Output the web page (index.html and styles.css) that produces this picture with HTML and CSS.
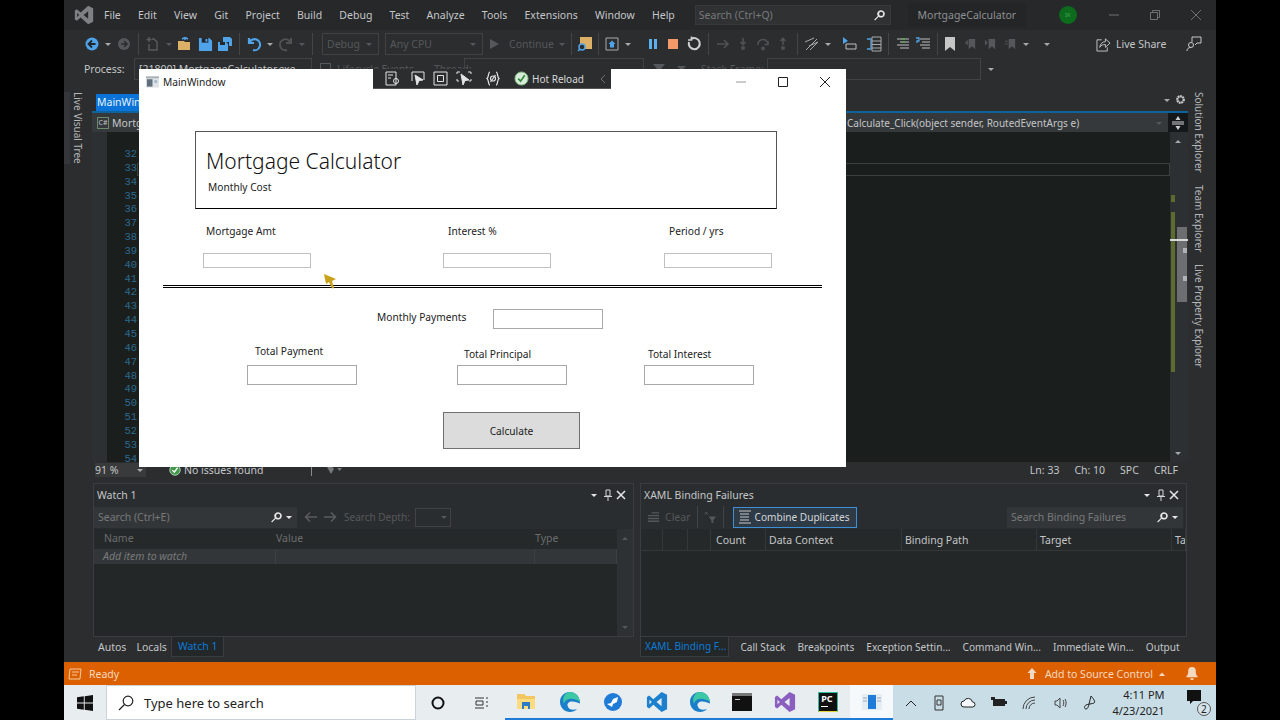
FILE: index.html
```html
<!DOCTYPE html>
<html lang="en">
<head>
    <meta charset="UTF-8">
    <title>MortgageCalculator - Visual Studio</title>
    <link rel="stylesheet" href="styles.css">
</head>
<body>
<svg class="defs" width="0" height="0">
  <symbol id="vs" viewBox="0 0 24 24"><path d="M17 1 L23 4 V20 L17 23 L8 15 L3.5 19 L1 17.5 V6.5 L3.5 5 L8 9 Z M17 7.5 L11.5 12 L17 16.5 Z M3.8 9.5 V14.5 L6.3 12 Z"/></symbol>
  <symbol id="mag" viewBox="0 0 16 16"><path d="M10 1.5a4.5 4.5 0 1 1-3 7.9L2.5 14 1.5 13 6 8.5A4.5 4.5 0 0 1 10 1.5zm0 2a2.5 2.5 0 1 0 0 5 2.5 2.5 0 0 0 0-5z"/></symbol>
  <symbol id="drop" viewBox="0 0 8 8"><path d="M1 3h6L4 6z"/></symbol>
  <symbol id="check" viewBox="0 0 16 16"><circle cx="8" cy="8" r="7" fill="#3f9a4a" stroke="#d8e8d8"/><path d="M4.5 8.2 7 10.8 11.5 5" fill="none" stroke="#fff" stroke-width="1.8"/></symbol>
  <symbol id="edge" viewBox="0 0 22 22"><path d="M11 1C5 1 1 5.5 1 11c0 6 5 10 10 10 2.5 0 5-.8 7-3-4 1.500-9 .5-9.5-3.5-.3-2 1.500-4 4.500-4 3.500 0 6 1.500 8 2C21 6 17 1 11 1z" fill="#1b7ec9"/><path d="M11 1c5 0 9 4 10 9.500-3-1.500-7-3.500-11-2.500C7 8.800 5 11 5 13 2.500 7 6 1 11 1z" fill="#3cc8a5"/></symbol>
</svg>

<div class="screen">
  <div class="desktop">

    <div class="titlebar">
      <svg class="vs-logo"><use href="#vs"/></svg>
      <nav class="menu">
        <span>File</span><span>Edit</span><span>View</span><span>Git</span><span>Project</span><span>Build</span><span>Debug</span><span>Test</span><span>Analyze</span><span>Tools</span><span>Extensions</span><span>Window</span><span>Help</span>
      </nav>
      <div class="quick-search">
        <span>Search (Ctrl+Q)</span>
        <svg class="mag-icon"><use href="#mag"/></svg>
      </div>
      <div class="solution-name">MortgageCalculator</div>
      <div class="avatar">IK</div>
      <div class="win-buttons">
        <svg width="12" height="12" viewBox="0 0 12 12"><path d="M1 6h10" stroke="#6e7072"/></svg>
        <svg width="12" height="12" viewBox="0 0 12 12" fill="none" stroke="#6e7072"><path d="M1.5 3.5h7v7h-7zM3.5 3.5v-2h7v7h-2"/></svg>
        <svg width="12" height="12" viewBox="0 0 12 12"><path d="M1 1l10 10M11 1L1 11" stroke="#6e7072"/></svg>
      </div>
    </div>

    <div class="toolbar">
      <i class="grip"></i>
      <span class="ic"><svg width="16" height="16" viewBox="0 0 16 16"><circle cx="8" cy="8" r="6.5" fill="#4fa3e8"/><path d="M8 4.5 4.5 8 8 11.5M5 8h6.5" fill="none" stroke="#22262a" stroke-width="1.8"/></svg></span>
      <svg class="dd"><use href="#drop"/></svg>
      <span class="ic"><svg width="16" height="16" viewBox="0 0 16 16"><circle cx="8" cy="8" r="6" fill="#55585a"/><path d="M8 5l3 3-3 3M11 8H5" fill="none" stroke="#2a2c2e" stroke-width="1.6"/></svg></span>
      <i class="sep"></i>
      <span class="ic"><svg width="16" height="16" viewBox="0 0 16 16" fill="none" stroke="#5a5c5e" stroke-width="1.4"><path d="M4 8v6h8V6l-3-3H7"/><path d="M4 1v5M1.5 3.5h5"/></svg></span>
      <svg class="dd dim"><use href="#drop"/></svg>
      <span class="ic"><svg width="16" height="16" viewBox="0 0 16 16"><path d="M1 5h6l1 1h5v8H1z" fill="#dcb067"/><path d="M8 4V1.500M8 1.500l3 1.500M8 1.500 5 3" stroke="#4fa3e8" stroke-width="1.500" fill="none"/></svg></span>
      <span class="ic"><svg width="15" height="15" viewBox="0 0 16 16"><path d="M1 1h11l3 3v11H1z" fill="#4fa3e8"/><path d="M4 1h7v5H4z" fill="#23262a"/><path d="M8 2h2v3H8z" fill="#4fa3e8"/></svg></span>
      <span class="ic"><svg width="16" height="16" viewBox="0 0 16 16"><path d="M6 1h7l2 2v7h-3V6H6z" fill="#4fa3e8"/><path d="M1 6h8l2 2v7H1z" fill="#4fa3e8"/><path d="M3 6h5v3H3z" fill="#23262a"/></svg></span>
      <i class="sep"></i>
      <span class="ic"><svg width="16" height="16" viewBox="0 0 16 16" fill="none" stroke="#4fa3e8" stroke-width="2.2"><path d="M3 2v5h5"/><path d="M3.500 6.500A5.500 5.500 0 1 1 7 14"/></svg></span>
      <svg class="dd"><use href="#drop"/></svg>
      <span class="ic"><svg width="16" height="16" viewBox="0 0 16 16" fill="none" stroke="#505254" stroke-width="2"><path d="M13 2v5H8"/><path d="M12.500 6.500A5.500 5.500 0 1 0 9 14"/></svg></span>
      <svg class="dd dim"><use href="#drop"/></svg>
      <i class="sep"></i>
      <div class="combo combo-debug"><span>Debug</span><svg class="dd dim"><use href="#drop"/></svg></div>
      <div class="combo combo-cpu"><span>Any CPU</span><svg class="dd dim"><use href="#drop"/></svg></div>
      <span class="ic ic-play"><svg width="12" height="12" viewBox="0 0 12 12"><path d="M2 1l9 5-9 5z" fill="#55585a"/></svg></span>
      <span class="tool-label">Continue</span>
      <svg class="dd dim dd-continue"><use href="#drop"/></svg>
      <i class="sep sep-tight"></i>
      <span class="ic"><svg width="16" height="16" viewBox="0 0 16 16"><path d="M3 1h12v12H8V8H3z" fill="#dcb067"/><circle cx="5" cy="11" r="3" fill="none" stroke="#4fa3e8" stroke-width="1.500"/><path d="M3 13l-2 2" stroke="#4fa3e8" stroke-width="1.500"/></svg></span>
      <i class="sep sep-tight"></i>
      <span class="ic"><svg width="14" height="14" viewBox="0 0 14 14"><path d="M1 1h12v12H1z" fill="none" stroke="#a8aaac"/><path d="M7 3.500 3.500 7H5v3.500h4V7h1.500z" fill="#4fa3e8"/></svg></span>
      <svg class="dd"><use href="#drop"/></svg>
      <i class="grip grip-mid"></i>
      <span class="ic"><svg width="12" height="12" viewBox="0 0 12 12"><path d="M2 1h3v10H2zM7 1h3v10H7z" fill="#5cb0ee"/></svg></span>
      <span class="ic"><svg width="12" height="12" viewBox="0 0 12 12"><path d="M1 1h10v10H1z" fill="#f49a6a"/></svg></span>
      <span class="ic ic-restart"><svg width="16" height="16" viewBox="0 0 16 16" fill="none" stroke="#d0d0d0" stroke-width="2"><path d="M5 3.200A5.500 5.500 0 1 1 3 6"/><path d="M5.500 .5v3.500H2" stroke-width="1.600"/></svg></span>
      <i class="sep"></i>
      <span class="ic"><svg width="14" height="14" viewBox="0 0 14 14" fill="none" stroke="#505254" stroke-width="1.600"><path d="M1 7h11M8 3l4 4-4 4"/></svg></span>
      <span class="ic"><svg width="14" height="14" viewBox="0 0 14 14" fill="none" stroke="#505254" stroke-width="1.600"><path d="M7 1v6M4.500 5 7 7.500 9.500 5"/><circle cx="7" cy="11" r="1.200"/></svg></span>
      <span class="ic"><svg width="14" height="14" viewBox="0 0 14 14" fill="none" stroke="#505254" stroke-width="1.600"><path d="M2 8a5 5 0 0 1 10-1M12 4v3.500H8.500"/><circle cx="7" cy="11.500" r="1.200"/></svg></span>
      <span class="ic"><svg width="14" height="14" viewBox="0 0 14 14" fill="none" stroke="#505254" stroke-width="1.600"><path d="M7 8V2M4.500 4 7 1.500 9.500 4"/><circle cx="7" cy="11" r="1.200"/></svg></span>
      <i class="sep"></i>
      <span class="ic"><svg width="16" height="16" viewBox="0 0 16 16" fill="none" stroke="#a8aaac"><path d="M1 6l9-4M5 10l9-4M2 14 13 3M6 14l8-8"/></svg></span>
      <svg class="dd"><use href="#drop"/></svg>
      <i class="grip grip-mid grip-close"></i>
      <span class="ic"><svg width="16" height="16" viewBox="0 0 16 16"><path d="M1 1l5 4-5 3z" fill="#4fa3e8"/><path d="M4 8h10v5H4z" fill="none" stroke="#c0c0c0"/></svg></span>
      <span class="ic ic-wide"><svg width="16" height="16" viewBox="0 0 16 16" fill="none"><path d="M1 3h4v10H1" stroke="#4fa3e8" stroke-width="1.300"/><path d="M6 1h9v14H6z M6 5h9M6 8.500h9M6 12h9" stroke="#a8aaac"/></svg></span>
      <i class="sep"></i>
      <span class="ic"><svg width="14" height="14" viewBox="0 0 14 14"><path d="M1 2h12M4 5h9M1 8h12M4 11h9" stroke="#c0c0c0"/><path d="M5 2h4M5 5h4" stroke="#63b04f"/></svg></span>
      <span class="ic"><svg width="16" height="14" viewBox="0 0 16 14"><path d="M5 2h10M7 5h8M5 8h10M7 11h8" stroke="#c0c0c0"/><path d="M1 1h3v3H2v2" fill="none" stroke="#4fa3e8" stroke-width="1.300"/></svg></span>
      <i class="sep sep-left"></i>
      <span class="ic"><svg width="12" height="14" viewBox="0 0 12 14"><path d="M1 0h10v14L6 10 1 14z" fill="#c6c6c6"/></svg></span>
      <span class="ic"><svg width="13" height="13" viewBox="0 0 14 14"><path d="M5 1h7v11L8.500 9 5 12z M1 5l3-3v6z" fill="#55585a"/></svg></span>
      <span class="ic"><svg width="13" height="13" viewBox="0 0 14 14"><path d="M5 1h7v11L8.500 9 5 12z M1 2l3 3-3 3z" fill="#55585a"/></svg></span>
      <span class="ic"><svg width="13" height="13" viewBox="0 0 14 14"><path d="M5 1h7v11L8.500 9 5 12zM1 3h3v1H1zM1 6h3v1H1z" fill="#55585a"/></svg></span>
      <svg class="dd"><use href="#drop"/></svg>
      <i class="grip grip-mid"></i>
      <svg class="dd"><use href="#drop"/></svg>
      <div class="live-share">
        <svg width="15" height="15" viewBox="0 0 16 16" fill="none" stroke="#c8c8c8"><path d="M6 3H1v12h11v-4"/><path d="M4 11c.5-4 3-6 6-6V2l5 4.500L10 11V8c-3 0-5 1-6 3z"/></svg>
        <span>Live Share</span>
      </div>
      <span class="feedback"><svg width="16" height="16" viewBox="0 0 16 16" fill="none" stroke="#c8c8c8"><circle cx="5" cy="9" r="2.500"/><path d="M1 15c0-2.500 1.500-3.500 4-3.500M6 6V1h9v6h-4l-2 2"/></svg></span>
    </div>

    <div class="debugbar">
      <i class="grip"></i>
      <span class="process-label">Process:</span>
      <div class="combo combo-process"><span>[21800] MortgageCalculator.exe</span></div>
      <span class="lifecycle-icon"></span>
      <span class="debug-dim lab-lifecycle">Lifecycle Events</span>
      <span class="debug-dim lab-thread">Thread:</span>
      <div class="combo combo-thread"></div>
      <svg class="filter-icon" width="12" height="10" viewBox="0 0 12 10"><path d="M0 0h12L7 6v4H5V6z" fill="#55585a"/></svg>
      <svg class="filter-icon" width="12" height="10" viewBox="0 0 12 10"><path d="M3 2h9L8 6v4H7V6z" fill="#55585a"/></svg>
      <span class="debug-dim lab-stack">Stack Frame:</span>
      <div class="combo combo-stack"></div>
      <svg class="dd dd-stack"><use href="#drop"/></svg>
    </div>

    <div class="workspace">
      <aside class="rail rail-left">
        <div class="rail-tab">Live Visual Tree</div>
      </aside>

      <div class="center">
        <section class="docwell">
          <div class="tabstrip">
            <div class="doc-tab">MainWindow.xaml.cs</div>
            <div class="tabstrip-tools">
              <svg class="dd"><use href="#drop"/></svg>
              <svg width="11" height="11" viewBox="0 0 12 12"><circle cx="6" cy="6" r="3.500" fill="none" stroke="#d0d0d0" stroke-width="2.500" stroke-dasharray="2 .6"/></svg>
            </div>
          </div>
          <div class="navbar">
            <div class="nav-left"><span class="cs-badge">C#</span><span>MortgageCalculator</span></div>
            <div class="nav-right">
              <span class="nav-member">Calculate_Click(object sender, RoutedEventArgs e)</span>
              <svg class="dd dim"><use href="#drop"/></svg>
              <span class="splitter"><svg width="12" height="14" viewBox="0 0 12 14"><path d="M0 6h12M0 8h12" stroke="#d0d0d0"/><path d="M6 0 3.500 4h5zM6 14l-2.500-4h5z" fill="#d0d0d0"/></svg></span>
            </div>
          </div>
          <div class="editor">
            <div class="margin-bar"></div>
            <div class="gutter">
              <span>32</span><span>33</span><span>34</span><span>35</span><span>36</span><span>37</span><span>38</span><span>39</span><span>40</span><span>41</span><span>42</span><span>43</span><span>44</span><span>45</span><span>46</span><span>47</span><span>48</span><span>49</span><span>50</span><span>51</span><span>52</span><span>53</span><span>54</span>
            </div>
            <div class="code">
              <div class="current-line"></div>
            </div>
            <div class="scrollbar">
              <svg class="dd dd-up"><use href="#drop"/></svg>
              <div class="change-mark change-short"></div>
              <div class="change-mark change-long"></div>
              <div class="thumb"></div>
              <div class="caret-mark"></div>
              <div class="map-dot map-dot-a"></div>
              <div class="map-dot map-dot-b"></div>
              <svg class="dd dd-down"><use href="#drop"/></svg>
            </div>
          </div>
          <div class="doc-status">
            <div class="zoom-box"><span>91 %</span><svg class="dd"><use href="#drop"/></svg></div>
            <svg class="status-check"><use href="#check"/></svg>
            <span class="issues">No issues found</span>
            <i class="status-sep"></i>
            <svg class="status-brush" width="16" height="10" viewBox="0 0 16 10"><path d="M1 2l4-2 3 4-3 5zM11 3h5l-2.500 3z" fill="#77797b"/></svg>
            <div class="caret-info"><span>Ln: 33</span><span>Ch: 10</span><span>SPC</span><span>CRLF</span></div>
          </div>
        </section>

        <section class="panels">
          <div class="panel panel-watch">
            <div class="panel-box">
              <div class="panel-head">
                <span>Watch 1</span><i class="hatch"></i>
                <svg class="dd dd-light"><use href="#drop"/></svg>
                <svg width="10" height="12" viewBox="0 0 10 12" fill="none" stroke="#d8d8d8"><path d="M3 1h4v6H3zM1 7.500h8M5 8v4"/></svg>
                <svg width="10" height="10" viewBox="0 0 10 10"><path d="M1 1l8 8M9 1 1 9" stroke="#e8e8e8" stroke-width="1.500"/></svg>
              </div>
              <div class="watch-tools">
                <div class="search-box search-watch">
                  <span>Search (Ctrl+E)</span>
                  <svg class="mag-icon"><use href="#mag"/></svg>
                  <svg class="dd dd-light"><use href="#drop"/></svg>
                </div>
                <svg class="arrow" width="14" height="12" viewBox="0 0 14 12" fill="none" stroke="#5a5c5e" stroke-width="1.500"><path d="M13 6H2M6 1.500 1.500 6 6 10.500"/></svg>
                <svg class="arrow" width="14" height="12" viewBox="0 0 14 12" fill="none" stroke="#5a5c5e" stroke-width="1.500"><path d="M1 6h11M8 1.500 12.500 6 8 10.500"/></svg>
                <span class="depth-label">Search Depth:</span>
                <div class="depth-box"><svg class="dd dim"><use href="#drop"/></svg></div>
              </div>
              <div class="watch-body">
                <div class="watch-table">
                  <div class="watch-row watch-header"><span>Name</span><span>Value</span><span>Type</span></div>
                  <div class="watch-row watch-add"><span>Add item to watch</span><span></span><span></span></div>
                </div>
                <div class="watch-scroll">
                  <svg class="dd dd-up"><use href="#drop"/></svg>
                  <svg class="dd dd-down"><use href="#drop"/></svg>
                </div>
              </div>
            </div>
            <div class="panel-tabs">
              <span>Autos</span><span>Locals</span><span class="tab-on">Watch 1</span>
            </div>
          </div>

          <div class="panel panel-xaml">
            <div class="panel-box">
              <div class="panel-head">
                <span>XAML Binding Failures</span><i class="hatch"></i>
                <svg class="dd dd-light"><use href="#drop"/></svg>
                <svg width="10" height="12" viewBox="0 0 10 12" fill="none" stroke="#d8d8d8"><path d="M3 1h4v6H3zM1 7.500h8M5 8v4"/></svg>
                <svg width="10" height="10" viewBox="0 0 10 10"><path d="M1 1l8 8M9 1 1 9" stroke="#e8e8e8" stroke-width="1.500"/></svg>
              </div>
              <div class="xaml-tools">
                <svg class="clear-icon" width="13" height="13" viewBox="0 0 14 14"><path d="M5 2h8M1 5h12M1 8h12M1 11h12" stroke="#55585a" stroke-width="1.500"/></svg>
                <span class="clear-label">Clear</span>
                <i class="sep"></i>
                <svg width="13" height="13" viewBox="0 0 14 14"><path d="M5 6h8L10 10v3H8v-3z" fill="#55585a"/><path d="M1 1l3 3M4 1 1 4" stroke="#55585a"/></svg>
                <i class="sep"></i>
                <div class="toggle-btn">
                  <svg width="14" height="14" viewBox="0 0 14 14" fill="none" stroke="#c8c8c8"><path d="M1 1h12M2 4h9M2 7h9M2 10h9M1 13h12"/></svg>
                  <span>Combine Duplicates</span>
                </div>
                <div class="search-box search-bind">
                  <span>Search Binding Failures</span>
                  <svg class="mag-icon"><use href="#mag"/></svg>
                  <svg class="dd dd-light"><use href="#drop"/></svg>
                </div>
              </div>
              <div class="bind-header">
                <span></span><span></span><span></span>
                <span>Count</span><span>Data Context</span><span>Binding Path</span><span>Target</span><span>Tar</span>
              </div>
            </div>
            <div class="panel-tabs panel-tabs-x">
              <span class="tab-on">XAML Binding F...</span><span>Call Stack</span><span>Breakpoints</span><span>Exception Settin...</span><span>Command Win...</span><span>Immediate Win...</span><span>Output</span>
            </div>
          </div>
        </section>
      </div>

      <aside class="rail rail-right">
        <div class="rail-tab">Solution Explorer</div>
        <div class="rail-tab">Team Explorer</div>
        <div class="rail-tab">Live Property Explorer</div>
      </aside>
    </div>

    <div class="statusbar">
      <svg width="14" height="12" viewBox="0 0 14 12" fill="none" stroke="#f3c9a0"><path d="M2 1h11l-1 10H1zM4 4h7M4 7h5"/></svg>
      <span class="ready">Ready</span>
      <div class="source-control">
        <svg class="src-arrow" width="10" height="12" viewBox="0 0 10 12"><path d="M5 0 9.500 5H7v6H3V5H.5z" fill="#f3d9c0"/></svg>
        <span>Add to Source Control</span>
        <svg width="8" height="8" viewBox="0 0 8 8"><path d="M1 6h6L4 2.500z" fill="#f3d9c0"/></svg>
        <svg class="bell" width="14" height="15" viewBox="0 0 14 16"><path d="M7 1a4 4 0 0 1 4 4c0 4 1 5 2 6v1H1v-1c1-1 2-2 2-6a4 4 0 0 1 4-4zM5 13h4a2 2 0 0 1-4 0z" fill="#f3d9c0"/></svg>
      </div>
    </div>

    <div class="taskbar">
      <div class="task-left">
        <span class="start"><svg width="16" height="16" viewBox="0 0 16 16" fill="#111"><path d="M0 2.300 6.800 1.300v6.200H0zM7.700 1.200 16 0v7.500H7.700zM0 8.500h6.800v6.200L0 13.700zM7.700 8.500H16V16l-8.300-1.200z"/></svg></span>
        <div class="task-search">
          <svg width="16" height="16" viewBox="0 0 16 16" fill="none" stroke="#222" stroke-width="1.200"><circle cx="10" cy="6" r="4.800"/><path d="M6.500 9.500 1 15"/></svg>
          <span>Type here to search</span>
        </div>
        <span class="task-ic"><svg width="14" height="14" viewBox="0 0 14 14"><circle cx="7" cy="7" r="5.500" fill="none" stroke="#111" stroke-width="2"/></svg></span>
        <span class="task-ic"><svg width="16" height="16" viewBox="0 0 16 16" fill="none" stroke="#333"><path d="M2 3h9M2 13h9M3 6h7v4H3z"/><path d="M14 2v12" stroke-dasharray="2 2"/></svg></span>
        <span class="task-ic on task-gap"><svg width="20" height="18" viewBox="0 0 20 18"><path d="M1 1h7l2 2h9v13H1z" fill="#f2c661"/><path d="M1 6h18v10H1z" fill="#ffdb80"/><path d="M6 9h8v7h-2v-3H8v3H6z" fill="#2b7cc7"/></svg></span>
        <span class="task-ic on"><svg width="22" height="22"><use href="#edge"/></svg></span>
        <span class="task-ic on"><svg width="20" height="20" viewBox="0 0 20 20"><circle cx="10" cy="10" r="9" fill="#1f7bd8"/><path d="M4 12l4-1 2-4 5-2-1 5-4 2-1 3z" fill="#fff"/></svg></span>
        <span class="task-ic on"><svg class="vs-blue" width="22" height="24"><use href="#vs"/></svg></span>
        <span class="task-ic on"><svg width="22" height="22"><use href="#edge"/></svg></span>
        <span class="task-ic on task-pull"><svg width="20" height="18" viewBox="0 0 20 18"><path d="M0 0h20v18H0z" fill="#111"/><path d="M0 0h20v3H0z" fill="#777"/><path d="M3 6h5v1H3z" fill="#ccc"/></svg></span>
        <span class="task-ic on task-pull"><svg class="vs-purple" width="22" height="24"><use href="#vs"/></svg></span>
        <span class="task-ic on"><span class="pycharm">PC<i></i></span></span>
        <span class="task-ic on active"><svg width="20" height="16" viewBox="0 0 20 16"><path d="M0 0h20v16H0z" fill="#e6edf3"/><path d="M6 1h8v14H6z" fill="#1f7bd8"/><path d="M1 4h4M1 7h4M15 4h4M15 7h4" stroke="#9ab"/></svg></span>
      </div>
      <div class="tray">
        <svg width="12" height="8" viewBox="0 0 12 8" fill="none" stroke="#222"><path d="M1 7l5-5 5 5"/></svg>
        <svg width="12" height="16" viewBox="0 0 12 16" fill="none" stroke="#333"><path d="M2 1h8v14H2zM4 5h4v5H4z"/></svg>
        <svg width="16" height="11" viewBox="0 0 16 11"><path d="M4 10a3 3 0 0 1 0-6 4.500 4.500 0 0 1 8.500 1A2.500 2.500 0 0 1 12.500 10z" fill="#f4f8fa" stroke="#222"/></svg>
        <svg width="16" height="11" viewBox="0 0 16 11"><path d="M2 2h12v7H2z" fill="#222"/><path d="M0 0h4v3H0zM14 4h2v3h-2z" fill="#222"/></svg>
        <svg width="16" height="14" viewBox="0 0 16 14" fill="none" stroke="#444"><path d="M1 13A12 12 0 0 1 13 1M4 13a9 9 0 0 1 9-9M7 13a6 6 0 0 1 6-6"/></svg>
        <svg width="14" height="14" viewBox="0 0 14 14" fill="none" stroke="#444"><path d="M1 5h2l3-3v10L3 9H1zM9 4c1 2 1 4 0 6M11 3c1.500 2.500 1.500 5.500 0 8"/></svg>
        <svg width="14" height="16" viewBox="0 0 14 16" fill="none" stroke="#222"><path d="M8 1 6 9c-.5 2-1 5-3 5s-2-3 0-4 6-1 8-2-1-5-3-7z"/></svg>
        <div class="clock"><span>4:11 PM</span><span>4/23/2021</span></div>
        <div class="notify">
          <svg width="16" height="15" viewBox="0 0 16 15"><path d="M1 0h14v11H7l-3 3v-3H1z" fill="#111"/></svg>
          <span class="notify-count">2</span>
        </div>
      </div>
    </div>

    <div class="app-window">
      <div class="hot-reload">
        <i class="grip"></i>
        <svg width="16" height="15" viewBox="0 0 16 15" fill="none" stroke="#e4e4e4"><path d="M1 1h10v13H1zM3 4h5M3 7h3"/><circle cx="11" cy="10" r="2.500"/></svg>
        <svg width="16" height="15" viewBox="0 0 16 15" fill="none" stroke="#e4e4e4"><path d="M3 10V1h12v8"/><path d="M6 4l8 5-4 .5L8 14z" fill="#e4e4e4"/></svg>
        <svg width="15" height="15" viewBox="0 0 15 15" fill="none" stroke="#e4e4e4"><path d="M1 1h13v13H1zM4.500 4.500h6v6h-6z"/></svg>
        <svg width="16" height="15" viewBox="0 0 16 15" fill="none" stroke="#e4e4e4"><path d="M1 3V1h3M12 1h3v2M1 8v2h2M15 8v2h-2"/><path d="M5 3l8 6-4 .5L7 14z" fill="#e4e4e4"/></svg>
        <svg class="hot-bind" width="14" height="15" viewBox="0 0 14 15" fill="none" stroke="#e4e4e4" stroke-width="1.200"><path d="M4 1C2 1 3 6 1 7.500 3 9 2 14 4 14M10 1c2 0 1 5 3 6.500C11 9 12 14 10 14"/><circle cx="7" cy="7.500" r="2.500"/><path d="M4.500 11 9.500 4"/></svg>
        <svg class="hot-check" width="15" height="15" viewBox="0 0 16 16"><circle cx="8" cy="8" r="7" fill="#d8ead8" stroke="#7ab57a"/><path d="M4.500 8.200 7 10.800 11.500 4.500" fill="none" stroke="#2e8b3a" stroke-width="1.800"/></svg>
        <span class="hot-label">Hot Reload</span>
        <svg class="hot-chevron" width="6" height="10" viewBox="0 0 6 10" fill="none" stroke="#6e7072"><path d="M5 1 1 5l4 4"/></svg>
      </div>

      <div class="window-title">
        <svg width="13" height="12" viewBox="0 0 14 12"><path d="M0 0h14v12H0z" fill="#dfe3e6"/><path d="M0 0h14v2H0z" fill="#a8b0b6"/><path d="M1 3h6v8H1z" fill="#5f6f7c"/><path d="M9 4h3v3H9z" fill="#9fb8cc"/></svg>
        <span>MainWindow</span>
        <div class="window-controls">
          <svg width="10" height="10" viewBox="0 0 10 10"><path d="M0 5h10" stroke="#999"/></svg>
          <svg width="10" height="10" viewBox="0 0 10 10"><path d="M.5.5h9v9h-9z" fill="none" stroke="#222"/></svg>
          <svg width="10" height="10" viewBox="0 0 10 10"><path d="M0 0l10 10M10 0 0 10" stroke="#222"/></svg>
        </div>
      </div>

      <header class="calc-header">
        <h1>Mortgage Calculator</h1>
        <p>Monthly Cost</p>
      </header>

      <div class="input-row">
        <div class="field">
          <label class="lab-a">Mortgage Amt</label>
          <div class="box"></div>
        </div>
        <div class="field">
          <label class="lab-b">Interest %</label>
          <div class="box"></div>
        </div>
        <div class="field">
          <label class="lab-b">Period / yrs</label>
          <div class="box"></div>
        </div>
      </div>

      <div class="rule"></div>

      <div class="monthly-row">
        <label>Monthly Payments</label>
        <div class="box box-big"></div>
      </div>

      <div class="totals-row">
        <div class="field">
          <label class="lab-total lab-raised">Total Payment</label>
          <div class="box box-big"></div>
        </div>
        <div class="field">
          <label class="lab-total">Total Principal</label>
          <div class="box box-big"></div>
        </div>
        <div class="field">
          <label class="lab-total lab-near">Total Interest</label>
          <div class="box box-big"></div>
        </div>
      </div>

      <button class="calc-btn">Calculate</button>

      <svg class="cursor" width="15" height="16" viewBox="0 0 15 16"><path d="M1 1l12 5-4 2 2 7-2 .5L6 9l-3 2z" fill="#c9a21c"/></svg>
    </div>

  </div>
</div>
</body>
</html>
```

FILE: styles.css
```css
* {
  box-sizing: border-box;
}

body {
  margin: 0;
  background-color: #000;
  font-family: "Noto Sans", "Open Sans", Arial, sans-serif;
  overflow: hidden;
}

.defs {
  position: absolute;
}

.screen {
  width: 1280px;
  height: 720px;
  display: flex;
  justify-content: center;
}

.desktop {
  width: 1152px;
  height: 720px;
  display: flex;
  flex-direction: column;
  position: relative;
  background-color: #2b2d2f;
  color: #c4c6c8;
  font-size: 10.5px;
  white-space: nowrap;
}

/* title bar */
.titlebar {
  height: 30px;
  display: flex;
  align-items: center;
  background-color: #26282a;
}

.vs-logo {
  width: 20px;
  height: 20px;
  margin-left: 10px;
  fill: #7d8184;
}

.menu {
  display: flex;
  gap: 17.2px;
  margin-left: 10px;
}

.quick-search {
  width: 196px;
  height: 20px;
  margin-left: 20px;
  padding: 0 4px 0 3px;
  display: flex;
  align-items: center;
  justify-content: space-between;
  background-color: #2f3133;
  border: 1px solid #37393b;
  color: #77797b;
}

.mag-icon {
  width: 13px;
  height: 13px;
  fill: #e8e8e8;
}

.solution-name {
  height: 24px;
  width: 118px;
  margin-left: 17px;
  display: flex;
  align-items: center;
  justify-content: center;
  background-color: #232527;
  color: #8e9092;
}

.avatar {
  width: 18px;
  height: 18px;
  margin-left: 33px;
  display: flex;
  align-items: center;
  justify-content: center;
  border-radius: 50%;
  background-color: #0d6b1e;
  color: #3fa855;
  font-size: 6px;
}

.win-buttons {
  display: flex;
  gap: 29px;
  margin-left: 31px;
}

/* tool bars */
.toolbar {
  height: 28px;
  display: flex;
  align-items: center;
  padding-left: 8px;
  background-color: #2b2d2f;
}

.grip {
  width: 5px;
  height: 20px;
  margin-right: 5px;
  background-image: radial-gradient(#55585a 40%, transparent 45%);
  background-size: 2px 2px;
  flex-shrink: 0;
}

.grip-mid {
  margin: 0 3px 0 1px;
}

.grip-close {
  margin: 0 0 0 1px;
}

.ic {
  width: 20px;
  height: 20px;
  display: flex;
  align-items: center;
  justify-content: center;
  flex-shrink: 0;
}

.ic-play,
.ic-restart {
  margin-left: 1px;
}

.ic-wide {
  margin-left: 4px;
}

.dd {
  width: 12px;
  height: 8px;
  fill: #a8aaac;
  flex-shrink: 0;
}

.dd.dim {
  fill: #55585a;
}

.dd-light {
  fill: #e8e8e8;
}

.sep {
  width: 1px;
  height: 22px;
  margin: 0 4px;
  background-color: #424446;
  flex-shrink: 0;
}

.sep-tight {
  margin: 0 3px;
}

.sep-left {
  margin-right: 2px;
}

.combo {
  height: 22px;
  display: flex;
  align-items: center;
  justify-content: space-between;
  padding: 0 3px 0 4px;
  border: 1px solid #404244;
  color: #55585a;
  flex-shrink: 0;
}

.combo-debug {
  width: 57px;
  margin-left: 5px;
}

.combo-cpu {
  width: 98px;
  margin-left: 6px;
}

.tool-label {
  margin-left: 5px;
  width: 43px;
  color: #55585a;
}

.dd-continue {
  margin-left: 4px;
}

.live-share {
  display: flex;
  align-items: center;
  gap: 5px;
  margin-left: 43px;
}

.feedback {
  margin-left: 20px;
  display: flex;
}

.debugbar {
  height: 30px;
  display: flex;
  align-items: flex-start;
  padding-left: 8px;
}

.process-label {
  margin-top: 4px;
  width: 50px;
  margin-left: 2px;
}

.combo-process {
  width: 178px;
  height: 22px;
  color: #c4c6c8;
  overflow: hidden;
}

.lifecycle-icon {
  width: 11px;
  height: 11px;
  margin: 5px 0 0 8px;
  border: 1px solid #55585a;
}

.debug-dim {
  margin-top: 4px;
  color: #55585a;
}

.lab-lifecycle {
  width: 97px;
  margin-left: 6px;
}

.lab-thread {
  width: 30px;
}

.combo-thread {
  width: 180px;
}

.filter-icon {
  margin: 6px 0 0 9px;
}

.lab-stack {
  width: 66px;
  margin-left: 15px;
}

.combo-stack {
  width: 214px;
  height: 22px;
}

.dd-stack {
  margin: 7px 0 0 4px;
}

/* middle area */
.workspace {
  flex: 1;
  display: flex;
  min-height: 0;
}

.rail {
  width: 28px;
  flex-shrink: 0;
  display: flex;
  flex-direction: column;
  gap: 12px;
  padding-top: 4px;
}

.rail-left {
  align-items: center;
  background-image: linear-gradient(#34373a, #34373a);
  background-size: 6px 72px;
  background-position: 0 4px;
  background-repeat: no-repeat;
}

.rail-right {
  align-items: flex-start;
  padding-left: 4px;
}

.rail-tab {
  writing-mode: vertical-rl;
  font-size: 10px;
  line-height: 14px;
  color: #b4b6b8;
}

.center {
  flex: 1;
  min-width: 0;
  display: flex;
  flex-direction: column;
}

.docwell {
  height: 390px;
  padding-top: 6px;
  display: flex;
  flex-direction: column;
}

.tabstrip {
  height: 19px;
  display: flex;
  align-items: flex-start;
  padding-left: 4px;
  border-bottom: 2px solid #0e639c;
}

.doc-tab {
  height: 17px;
  width: 130px;
  padding-left: 1px;
  background-color: #0a73d8;
  color: #e6f0fa;
  line-height: 17px;
  overflow: hidden;
}

.tabstrip-tools {
  margin-left: auto;
  display: flex;
  align-items: center;
  gap: 2px;
  padding-right: 2px;
}

.navbar {
  height: 19px;
  display: flex;
  background-color: #36393b;
  padding-left: 5px;
}

.nav-left {
  width: 750px;
  flex-shrink: 0;
  display: flex;
  align-items: center;
  gap: 3px;
}

.cs-badge {
  width: 12px;
  height: 12px;
  border: 1px solid #6d8a6a;
  font-size: 7px;
  line-height: 10px;
  text-align: center;
}

.nav-right {
  flex: 1;
  display: flex;
  align-items: center;
}

.nav-member {
  flex: 1;
  font-size: 10px;
}

.splitter {
  width: 20px;
  height: 19px;
  margin-left: 3px;
  display: flex;
  align-items: center;
  justify-content: center;
  background-color: #15181a;
}

.editor {
  flex: 1;
  min-height: 0;
  display: flex;
  background-color: #1a1e1c;
  overflow: hidden;
}

.margin-bar {
  width: 15px;
  background-color: #2d3032;
  flex-shrink: 0;
}

.gutter {
  width: 30px;
  flex-shrink: 0;
  padding-top: 16px;
  display: flex;
  flex-direction: column;
  align-items: flex-end;
  color: #2b6a8f;
  font-family: "Liberation Mono", monospace;
  font-size: 10.5px;
}

.gutter span {
  height: 13.85px;
  line-height: 13.85px;
  flex-shrink: 0;
}

.code {
  flex: 1;
  padding-top: 31px;
}

.current-line {
  height: 13px;
  border: 1px solid #3a403c;
}

.scrollbar {
  width: 18px;
  position: relative;
  background-color: #2d3032;
  flex-shrink: 0;
}

.dd-up {
  position: absolute;
  top: 6px;
  left: 2px;
  transform: rotate(180deg);
}

.dd-down {
  position: absolute;
  bottom: 5px;
  left: 2px;
}

.change-mark {
  position: absolute;
  left: 1px;
  width: 4px;
  background-color: #5c6b2e;
}

.change-short {
  top: 63px;
  height: 7px;
}

.change-long {
  top: 80px;
  height: 160px;
}

.thumb {
  position: absolute;
  left: 7px;
  top: 95px;
  width: 10px;
  height: 75px;
  background-color: #6c6e70;
}

.caret-mark {
  position: absolute;
  left: 0;
  top: 107px;
  width: 18px;
  height: 2px;
  background-color: #d8d8d8;
}

.map-dot {
  position: absolute;
  left: 13px;
  width: 4px;
  height: 5px;
  background-color: #b0b2b4;
}

.map-dot-a {
  top: 116px;
}

.map-dot-b {
  top: 144px;
}

.doc-status {
  height: 16px;
  display: flex;
  align-items: center;
}

.zoom-box {
  width: 51px;
  margin-left: 3px;
  display: flex;
  justify-content: space-between;
  align-items: center;
  background-color: #383a3c;
}

.status-check {
  width: 12px;
  height: 12px;
  margin-left: 23px;
}

.issues {
  margin-left: 3px;
}

.status-sep {
  width: 1px;
  height: 11px;
  margin-left: 48px;
  background-color: #8a8c8e;
}

.status-brush {
  margin-left: 14px;
}

.caret-info {
  margin-left: auto;
  margin-right: 10px;
  display: flex;
  gap: 15px;
}

/* bottom tool windows */
.panels {
  height: 184px;
  display: flex;
  gap: 6px;
  padding: 5px 1px 5px 1px;
}

.panel {
  display: flex;
  flex-direction: column;
}

.panel-watch {
  width: 541px;
}

.panel-xaml {
  flex: 1;
  min-width: 0;
}

.panel-box {
  flex: 1;
  min-height: 0;
  display: flex;
  flex-direction: column;
  background-color: #242728;
  border: 1px solid #3a3d3f;
  overflow: hidden;
}

.panel-head {
  height: 21px;
  flex-shrink: 0;
  display: flex;
  align-items: center;
  gap: 3px;
  padding: 0 7px 0 3px;
  background-color: #2a2d2f;
}

.panel-head span {
  margin-right: 2px;
}

.hatch {
  flex: 1;
  height: 5px;
  margin-right: 1px;
  background-image: radial-gradient(#3e4143 40%, transparent 45%);
  background-size: 2px 2px;
}

.watch-tools,
.xaml-tools {
  height: 24px;
  flex-shrink: 0;
  display: flex;
  align-items: center;
  background-color: #2a2d2f;
}

.search-box {
  height: 21px;
  display: flex;
  align-items: center;
  padding: 0 2px 0 4px;
  background-color: #333638;
  color: #77797b;
}

.search-box span {
  flex: 1;
}

.search-watch {
  width: 203px;
}

.arrow {
  margin-left: 7px;
}

.arrow + .arrow {
  margin-left: 5px;
}

.depth-label {
  margin-left: 7px;
  font-size: 10px;
  color: #55585a;
}

.depth-box {
  width: 36px;
  height: 19px;
  margin-left: 5px;
  display: flex;
  align-items: center;
  justify-content: flex-end;
  border: 1px solid #404244;
}

.watch-body {
  flex: 1;
  min-height: 0;
  display: flex;
}

.watch-table {
  flex: 1;
}

.watch-row {
  display: grid;
  grid-template-columns: 182px 259px 1fr;
}

.watch-header {
  height: 20px;
  line-height: 19px;
  color: #6a6c6e;
  background-color: #26292a;
}

.watch-header span:first-child {
  padding-left: 10px;
}

.watch-add {
  height: 16px;
  line-height: 15px;
  background-color: #333638;
  border-bottom: 1px solid #232526;
  color: #77797b;
  font-style: italic;
}

.watch-add span {
  border-right: 1px solid #3d4042;
  padding-left: 9px;
}

.watch-scroll {
  width: 16px;
  position: relative;
  background-color: #2e3133;
}

.watch-scroll .dd {
  left: 2px;
  fill: #55585a;
}

.xaml-tools {
  padding-left: 6px;
}

.clear-label {
  margin-left: 5px;
  color: #55585a;
}

.xaml-tools .sep {
  margin: 0 6px;
}

.toggle-btn {
  width: 124px;
  height: 21px;
  margin-left: 3px;
  display: flex;
  align-items: center;
  gap: 3px;
  padding-left: 4px;
  border: 1px solid #3d8fd6;
  background-color: #2e3a46;
  color: #d4d6d8;
  font-size: 10.1px;
}

.search-bind {
  width: 176px;
  margin-left: auto;
  margin-right: 3px;
}

.bind-header {
  height: 22px;
  flex-shrink: 0;
  display: grid;
  grid-template-columns: 22px 25px 23px 55px 136px 135px 135px 1fr;
  line-height: 22px;
  background-color: #26292a;
  border-bottom: 1px solid #353839;
}

.bind-header span {
  padding-left: 3px;
  border-right: 1px solid #353839;
  overflow: hidden;
}

.bind-header span:nth-child(4) {
  padding-left: 5px;
}

.panel-tabs {
  height: 20px;
  flex-shrink: 0;
  display: flex;
  align-items: center;
  gap: 10px;
  padding-left: 5px;
}

.tab-on {
  height: 20px;
  margin-left: -6px;
  padding: 0 6px;
  line-height: 18px;
  color: #0a7ad8;
  background-color: #242728;
  border-left: 1px solid #3a3d3f;
  border-right: 1px solid #3a3d3f;
  border-bottom: 1px solid #3a3d3f;
}

.panel-tabs-x {
  padding-left: 0;
  gap: 12px;
  font-size: 10.1px;
}

.panel-tabs-x .tab-on {
  margin: 0 -1px 0 0;
  padding: 0 2px 0 4px;
}

/* status bar */
.statusbar {
  height: 23px;
  flex-shrink: 0;
  display: flex;
  align-items: center;
  padding-left: 4px;
  background-color: #dd6000;
  color: #f3d9c0;
}

.ready {
  margin-left: 7px;
}

.source-control {
  margin-left: auto;
  display: flex;
  align-items: center;
  gap: 5px;
  padding-right: 17px;
}

.src-arrow {
  margin-right: 3px;
}

.bell {
  margin-left: 14px;
}

/* windows task bar */
.taskbar {
  height: 35px;
  flex-shrink: 0;
  display: flex;
  color: #222;
}

.task-left {
  flex-shrink: 0;
  display: flex;
  align-items: center;
  background-color: #e8edf0;
}

.start {
  width: 42px;
  display: flex;
  justify-content: center;
}

.task-search {
  width: 310px;
  height: 35px;
  display: flex;
  align-items: center;
  gap: 10px;
  padding-left: 11px;
  background-color: #fff;
  border: 1px solid #ccd3d8;
  font-size: 13px;
}

.task-ic {
  width: 43.4px;
  height: 35px;
  display: flex;
  align-items: center;
  justify-content: center;
  flex-shrink: 0;
}

.task-ic.on {
  border-bottom: 2px solid #1f7bd8;
}

.task-ic.active {
  background-color: #f6f9fb;
}

.task-gap {
  margin-left: 2px;
}

.task-pull {
  margin-left: -1px;
}

.vs-blue {
  fill: #1c80cf;
}

.vs-purple {
  fill: #8a5fc0;
}

.pycharm {
  width: 20px;
  height: 20px;
  display: block;
  background-color: #111;
  color: #fff;
  font-size: 9px;
  font-weight: 700;
  line-height: 11px;
  padding-left: 2px;
  border: 1px solid #2fbfa0;
  border-bottom-color: #e5d53a;
}

.pycharm i {
  display: block;
  width: 7px;
  height: 1px;
  margin-top: 2px;
  background-color: #fff;
}

.tray {
  flex: 1;
  display: flex;
  align-items: center;
  justify-content: space-between;
  padding: 0 8px 0 12px;
  background-color: #c9dde6;
}

.clock {
  display: flex;
  flex-direction: column;
  align-items: flex-end;
  font-size: 11px;
  line-height: 16px;
}

.notify {
  position: relative;
  width: 22px;
  height: 26px;
  margin-left: 6px;
}

.notify-count {
  position: absolute;
  right: -3px;
  bottom: 0;
  width: 14px;
  height: 14px;
  border: 1px solid #555;
  border-radius: 50%;
  font-size: 10px;
  line-height: 12px;
  text-align: center;
  background-color: #d5e3ea;
}

/* the running wpf window */
.app-window {
  position: absolute;
  left: 75px;
  top: 69px;
  width: 707px;
  height: 398px;
  background-color: #fff;
  color: #222;
  font-size: 10.2px;
}

.hot-reload {
  position: absolute;
  left: 234px;
  top: 0;
  width: 238px;
  height: 20px;
  display: flex;
  align-items: center;
  gap: 8px;
  padding-left: 4px;
  background-color: #2b2d2f;
  border-bottom: 1px solid #55585a;
  color: #d8d8d8;
  font-size: 10px;
}

.hot-reload .grip {
  margin-right: -5px;
}

.hot-bind {
  margin-left: 6px;
}

.hot-check {
  margin-left: 6px;
}

.hot-label {
  margin-left: -5px;
}

.hot-chevron {
  margin-left: 8px;
}

.window-title {
  height: 26px;
  display: flex;
  align-items: center;
  gap: 4px;
  padding-left: 7px;
}

.window-controls {
  margin-left: auto;
  display: flex;
  gap: 32px;
  padding-right: 16px;
}

.calc-header {
  width: 582px;
  height: 78px;
  margin: 36px 0 0 56px;
  padding: 15px 0 0 10px;
  border: 1px solid #555;
  border-bottom-color: #000;
}

.calc-header h1 {
  margin: 0;
  font-size: 21px;
  font-weight: 300;
  line-height: 28px;
  color: #111;
}

.calc-header p {
  margin: 5px 0 0 2px;
  line-height: 14px;
}

.input-row {
  display: grid;
  grid-template-columns: 240px 221px 108px;
  margin-top: 15px;
  padding-left: 64px;
}

.field {
  display: flex;
  flex-direction: column;
}

.input-row label {
  height: 29px;
  line-height: 14px;
}

.lab-a {
  margin-left: 3px;
}

.lab-b {
  margin-left: 5px;
}

.box {
  width: 108px;
  height: 15px;
  border: 1px solid #c0c0c0;
  background-color: #fff;
}

.box-big {
  width: 110px;
  height: 20px;
  border-color: #a8a8a8;
}

.rule {
  width: 659px;
  height: 3px;
  margin: 17px 0 0 24px;
  border-top: 1px solid #000;
  border-bottom: 1px solid #000;
}

.monthly-row {
  display: flex;
  align-items: flex-start;
  margin-top: 21px;
  padding-left: 238px;
}

.monthly-row label {
  width: 116px;
  line-height: 16px;
}

.totals-row {
  display: grid;
  grid-template-columns: 210px 187px 110px;
  margin-top: 16px;
  padding-left: 108px;
}

.lab-total {
  height: 20px;
  margin-left: 7px;
  line-height: 18px;
}

.lab-raised {
  margin-left: 8px;
  line-height: 12px;
}

.lab-near {
  margin-left: 4px;
}

.calc-btn {
  display: block;
  width: 137px;
  height: 37px;
  margin: 27px 0 0 304px;
  background-color: #dcdcdc;
  border: 1px solid #707070;
  color: #222;
  font-family: inherit;
  font-size: 10.2px;
}

.cursor {
  position: absolute;
  left: 184px;
  top: 204px;
}
```
